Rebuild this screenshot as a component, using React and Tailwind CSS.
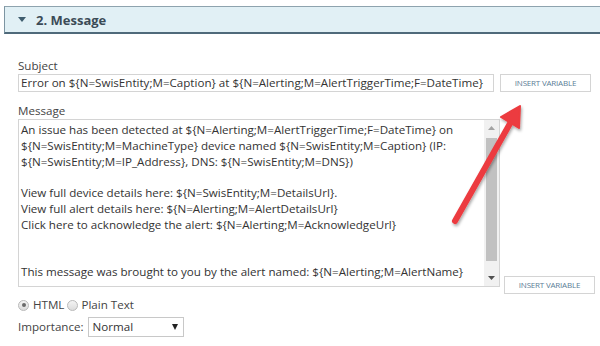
import React from 'react';

const messageLines = [
  "An issue has been detected at ${N=Alerting;M=AlertTriggerTime;F=DateTime} on",
  "${N=SwisEntity;M=MachineType} device named ${N=SwisEntity;M=Caption} (IP:",
  "${N=SwisEntity;M=IP_Address}, DNS: ${N=SwisEntity;M=DNS})",
  "",
  "View full device details here: ${N=SwisEntity;M=DetailsUrl}.",
  "View full alert details here: ${N=Alerting;M=AlertDetailsUrl}",
  "Click here to acknowledge the alert: ${N=Alerting;M=AcknowledgeUrl}",
  "",
  "",
  "This message was brought to you by the alert named: ${N=Alerting;M=AlertName}",
];

function InsertButton({ className }) {
  return (
    <button className={"block shrink-0 w-[91px] h-[18px] border border-[#d4d4d4] bg-white text-[8px] leading-none text-[#5b7d96] uppercase tracking-tight " + className}>
      Insert Variable
    </button>
  );
}

function Radio({ checked }) {
  return (
    <span className="block w-[11px] h-[11px] rounded-full border border-[#b9b9b9] bg-gradient-to-b from-[#f4f4f4] to-[#dcdcdc] relative">
      {checked && <span className="absolute left-[2.5px] top-[2.5px] w-[4px] h-[4px] rounded-full bg-[#6a6a6a]" />}
    </span>
  );
}

export default function App() {
  return (
    <div className="relative w-[600px] h-[346px] bg-white overflow-hidden leading-[16px]" style={{ fontFamily: '"Open Sans", "Noto Sans", sans-serif' }}>
      {/* section header */}
      <div className="mt-[6px] ml-[4px] h-[28px] flex items-center bg-[#e1f0f5] border-t border-t-[#8ea3ae] border-l border-l-[#7d95a2] border-b-2 border-b-[#4f6a7a]">
        <svg width="8" height="5" viewBox="0 0 8 5" className="ml-[13px]">
          <polygon points="0,0 8,0 4,5" fill="#3f5d6e" />
        </svg>
        <span className="ml-[10px] text-[13px] font-bold text-[#3b4b57]">2. Message</span>
      </div>

      <div className="pl-[18px]">
        <div className="mt-[23px] text-[11.6px] leading-[17px] text-[#444]">Subject</div>
        <div className="flex items-center">
          <div className="w-[476px] h-[18px] border border-[#d4d4d4] pl-[2px] text-[11.6px] leading-[16px] text-[#333] whitespace-nowrap overflow-hidden">
            {"Error on ${N=SwisEntity;M=Caption} at ${N=Alerting;M=AlertTriggerTime;F=DateTime}"}
          </div>
          <InsertButton className="ml-[6px]" />
        </div>

        <div className="mt-[10px] text-[11.6px] leading-[17px] text-[#444]">Message</div>
        <div className="flex items-start">
          <div className="w-[482px] h-[168px] border border-[#d4d4d4] flex">
            <div className="flex-1 pl-[2px] pt-[2px] text-[11.6px] leading-[15.8px] text-[#333]">
              {messageLines.map((line, i) => (
                <div key={i} className="whitespace-pre h-[15.8px]">{line}</div>
              ))}
            </div>
            <div className="w-[15px] bg-[#f1f1f1] flex flex-col items-center">
              <svg width="7" height="4" viewBox="0 0 7 4" className="mt-[6px]">
                <polygon points="0,4 7,4 3.5,0" fill="#a3a3a3" />
              </svg>
              <div className="mt-[8px] w-[11px] h-[123px] bg-[#c1c1c1]" />
              <div className="flex-1" />
              <svg width="7" height="4" viewBox="0 0 7 4" className="mb-[6px]">
                <polygon points="0,0 7,0 3.5,4" fill="#505050" />
              </svg>
            </div>
          </div>
          <InsertButton className="ml-[4px] mt-[157px]" />
        </div>

        <div className="mt-[3px] flex items-center text-[11.6px] leading-[16px] text-[#444]">
          <Radio checked />
          <span className="ml-[4px]">HTML</span>
          <span className="ml-[3px]"><Radio /></span>
          <span className="ml-[3px]">Plain Text</span>
        </div>

        <div className="mt-[4px] flex items-center text-[11.6px] text-[#444]">
          <span>Importance:</span>
          <div className="ml-[4px] w-[96px] h-[20px] border border-[#c8c8c8] flex items-center pl-[4px] pr-[5px] text-[#333]">
            <span className="flex-1">Normal</span>
            <svg width="6" height="6" viewBox="0 0 6 6">
              <polygon points="0,0 6,0 3,6" fill="#222" />
            </svg>
          </div>
        </div>
      </div>

      {/* annotation arrow */}
      <svg className="absolute left-0 top-0 pointer-events-none" width="600" height="346" viewBox="0 0 600 346">
        <defs>
          <filter id="shadow" x="-20%" y="-20%" width="140%" height="140%">
            <feDropShadow dx="1" dy="2" stdDeviation="1.5" floodColor="#000" floodOpacity="0.35" />
          </filter>
        </defs>
        <g filter="url(#shadow)">
          <line x1="455" y1="221" x2="512" y2="120" stroke="#ec3b3f" strokeWidth="6" strokeLinecap="round" />
          <polygon points="520,106 501,117 519,128" fill="#ec3b3f" stroke="#ec3b3f" strokeWidth="2" strokeLinejoin="round" />
        </g>
      </svg>
    </div>
  );
}
